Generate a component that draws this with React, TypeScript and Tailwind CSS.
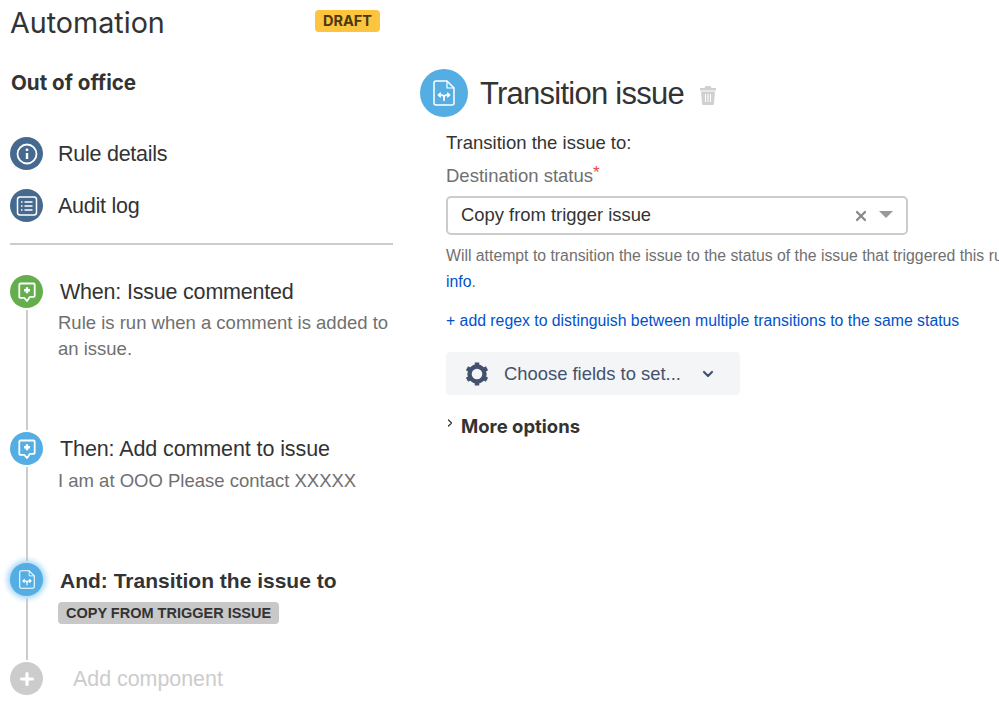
// Automation rule editor: step timeline on the left, selected step's config on the right.
import { ChevronDown, ChevronRight, X } from "lucide-react";
import type { ReactNode } from "react";

function CommentPlus() {
  return (
    <svg viewBox="0 0 20 20" className="h-[20px] w-[20px]" fill="none">
      <path
        d="M3.500 1.500h13a1.200 1.200 0 0 1 1.200 1.200v11a1.200 1.200 0 0 1-1.200 1.200h-3.700L10 19l-2.800-3.100H3.500a1.200 1.200 0 0 1-1.200-1.200v-12a1.200 1.200 0 0 1 1.200-1.200z"
        stroke="white"
        strokeWidth="1.800"
        strokeLinejoin="round"
      />
      <path d="M10 5.200v6M7 8.200h6" stroke="white" strokeWidth="2.400" />
    </svg>
  );
}

function DocTransition({ size }: { size: string }) {
  return (
    <svg viewBox="0 0 22 26" className={size} fill="none">
      <path
        d="M3 1h11l7 7v15a2 2 0 0 1-2 2H3a2 2 0 0 1-2-2V3a2 2 0 0 1 2-2z"
        stroke="white"
        strokeWidth="1.500"
        strokeLinejoin="round"
      />
      <path d="M14 1v7h7" stroke="white" strokeWidth="1.200" />
      <path
        d="M11 21v-3M5.500 15h3q2.500 0 2.500 3q0-3 2.500-3h3M7.800 12.700L5.500 15l2.300 2.300M14.200 12.700l2.300 2.300l-2.300 2.300"
        stroke="white"
        strokeWidth="1.600"
      />
    </svg>
  );
}

function Dot({ className, children }: { className: string; children: ReactNode }) {
  return (
    <div className={`flex h-[33px] w-[33px] shrink-0 items-center justify-center rounded-full ${className}`}>
      {children}
    </div>
  );
}

function NavItem({ icon, label }: { icon: ReactNode; label: string }) {
  return (
    <div className="flex h-[33px] items-center">
      <Dot className="bg-[#466a8f]">{icon}</Dot>
      <span className="ml-[15px] mt-[2px] text-[21.500px] tracking-[-0.25px] text-[#333]">{label}</span>
    </div>
  );
}

function Step({
  icon,
  color,
  height,
  rail = true,
  children,
}: {
  icon: ReactNode;
  color: string;
  height: string;
  rail?: boolean;
  children: ReactNode;
}) {
  return (
    <div className={`flex ${height}`}>
      <div className="flex w-[33px] shrink-0 flex-col items-center">
        <Dot className={color}>{icon}</Dot>
        {rail && <div className="mt-[2px] mb-[2px] w-[2px] flex-1 bg-[#ccc]" />}
      </div>
      <div className="ml-[17px] min-w-0 flex-1">{children}</div>
    </div>
  );
}

export default function App() {
  return (
    <div className="flex h-[705px] w-[999px] overflow-hidden bg-white font-['Liberation_Sans',Arial,sans-serif] text-[#333]">
      <aside className="w-[393px] shrink-0 pl-[10px]">
        <div className="flex h-[46px] items-center justify-between">
          <h1 className="font-['Inter',sans-serif] text-[28.700px] font-normal text-[#333]">Automation</h1>
          <span className="mb-[4px] mr-[13px] rounded-[4px] bg-[#fdc43f] px-[8px] py-[1px] font-['Inter',sans-serif] text-[14.500px] font-bold leading-[20px] text-[#4a3a10]">
            DRAFT
          </span>
        </div>
        <h2 className="mt-[23px] ml-[1px] h-[27px] font-['Inter',sans-serif] text-[20.600px] font-bold leading-[28px] text-[#333]">
          Out of office
        </h2>
        <div className="mt-[41px] flex flex-col gap-[19px]">
          <NavItem
            label="Rule details"
            icon={
              <svg viewBox="0 0 24 24" className="h-[24px] w-[24px]" fill="none">
                <circle cx="12" cy="12" r="9.500" stroke="white" strokeWidth="1.800" />
                <path d="M12 11v6" stroke="white" strokeWidth="2.400" />
                <circle cx="12" cy="7.800" r="1.400" fill="white" />
              </svg>
            }
          />
          <NavItem
            label="Audit log"
            icon={
              <svg viewBox="0 0 24 24" className="h-[24px] w-[24px]" fill="none">
                <rect x="2.500" y="3" width="19" height="18" rx="2.500" stroke="white" strokeWidth="1.500" />
                <path d="M9.500 8h8M9.500 12h8M9.500 16h8M6 8h1.500M6 12h1.500M6 16h1.500" stroke="white" strokeWidth="1.600" />
              </svg>
            }
          />
        </div>
        <div className="mt-[21px] mb-[30px] h-[2px] bg-[#ccc]" />

        <Step icon={<CommentPlus />} color="bg-[#65ae4e]" height="h-[157px]">
          <div className="pt-[1px] text-[21.500px] leading-[33px] tracking-[-0.2px] text-[#333]">When: Issue commented</div>
          <p className="mt-[1px] -ml-[2px] text-[18.500px] leading-[26px] text-[#707070]">
            Rule is run when a comment is added to an issue.
          </p>
        </Step>
        <Step icon={<CommentPlus />} color="bg-[#54aee3]" height="h-[131px]">
          <div className="pt-[1px] text-[21.500px] leading-[33px] tracking-[-0.1px] text-[#333]">Then: Add comment to issue</div>
          <p className="-ml-[2px] mt-[2px] text-[18.500px] leading-[26px] text-[#707070]">
            I am at OOO Please contact XXXXX
          </p>
        </Step>
        <Step
          icon={<DocTransition size="h-[19px] w-[16px]" />}
          color="bg-[#54aee3] shadow-[0_0_6px_2px_#8fcdf2]"
          height="h-[99px]"
        >
          <div className="mt-[1px] text-[21px] font-bold leading-[33px] text-[#333]">And: Transition the issue to</div>
          <span className="-ml-[2px] mt-[5px] inline-block rounded-[4px] bg-[#c8c8c8] px-[8px] text-[14.500px] font-bold leading-[22px] text-[#333]">
            COPY FROM TRIGGER ISSUE
          </span>
        </Step>
        <Step
          rail={false}
          color="bg-[#ccc]"
          height="h-[33px]"
          icon={
            <svg viewBox="0 0 16 16" className="h-[16px] w-[16px]">
              <path d="M8 2.500v11M2.500 8h11" stroke="white" strokeWidth="3.200" strokeLinecap="round" />
            </svg>
          }
        >
          <div className="ml-[13px] pt-[1px] text-[21.400px] leading-[33px] text-[#ccc]">Add component</div>
        </Step>
      </aside>

      <main className="ml-[27px] min-w-0 flex-1 pt-[69px]">
        <div className="flex h-[48px] items-center">
          <div className="flex h-[48px] w-[48px] shrink-0 items-center justify-center rounded-full bg-[#54aee3]">
            <DocTransition size="h-[26px] w-[22px]" />
          </div>
          <h2 className="ml-[12px] mt-[3px] text-[31px] font-normal tracking-[-0.75px] text-[#333]">Transition issue</h2>
          <svg viewBox="0 0 16 19" className="ml-[16px] mt-[5px] h-[19px] w-[16px]" fill="#d0d0d0">
            <path d="M5.500 0h5l1 2H16v2.500H0V2h4.500z" />
            <path d="M1 5.500h14l-1 12a1.500 1.500 0 0 1-1.500 1.500h-9A1.500 1.500 0 0 1 2 17.500z" />
            <path d="M5.500 8v8M8 8v8M10.500 8v8" stroke="white" strokeWidth="1" />
          </svg>
        </div>

        <div className="pl-[26px]">
          <div className="mt-[14px] text-[18.500px] leading-[24px] text-[#333]">Transition the issue to:</div>
          <div className="mt-[9px] text-[18.500px] leading-[24px] text-[#707070]">
            Destination status<sup className="top-[-4px] text-[17px] text-[#e5484d]">*</sup>
          </div>
          <div className="mt-[8px] flex h-[39px] w-[462px] items-center rounded-[5px] border-2 border-[#ccc] pb-[2px] pl-[13px] pr-[13px] text-[18.400px] text-[#333]">
            <span className="flex-1">Copy from trigger issue</span>
            <X className="mt-[2px] h-[16px] w-[16px] text-[#888]" strokeWidth={3.400} />
            <span className="ml-[10px] mb-[1px] h-0 w-0 border-x-[7px] border-t-[7px] border-x-transparent border-t-[#999]" />
          </div>
          <p className="mt-[8px] w-[620px] text-[15.800px] leading-[26px] text-[#707070]">
            Will attempt to transition the issue to the status of the issue that triggered this rule. More{" "}
            <span className="text-[#0052cc]">info</span>.
          </p>
          <div className="mt-[13px] whitespace-nowrap text-[15.800px] leading-[26px] text-[#0052cc]">
            + add regex to distinguish between multiple transitions to the same status
          </div>
          <div className="mt-[18px] flex h-[43px] w-[294px] items-center rounded-[4px] bg-[#f4f5f7] pl-[19px] text-[18.400px] text-[#42526e]">
            <svg viewBox="0 0 24 24" className="h-[24px] w-[24px] shrink-0" fill="none" stroke="#42526e">
              <circle cx="12" cy="12" r="7.500" strokeWidth="4.400" />
              <path
                d="M12 .500v4M12 19.500v4M2 6.200l3.500 2M18.500 15.800l3.500 2M2 17.800l3.500-2M18.500 8.200l3.500-2"
                strokeWidth="4.500"
              />
            </svg>
            <span className="ml-[15px]">Choose fields to set...</span>
            <ChevronDown className="ml-[19px] h-[16px] w-[16px]" strokeWidth={3.200} />
          </div>
          <div className="mt-[20px] flex h-[24px] items-center">
            <ChevronRight className="-ml-[2px] mb-[8px] h-[12px] w-[12px] text-[#333]" strokeWidth={2.400} />
            <span className="ml-[5px] font-['Inter',sans-serif] text-[18.500px] font-bold text-[#333]">
              More options
            </span>
          </div>
        </div>
      </main>
    </div>
  );
}
